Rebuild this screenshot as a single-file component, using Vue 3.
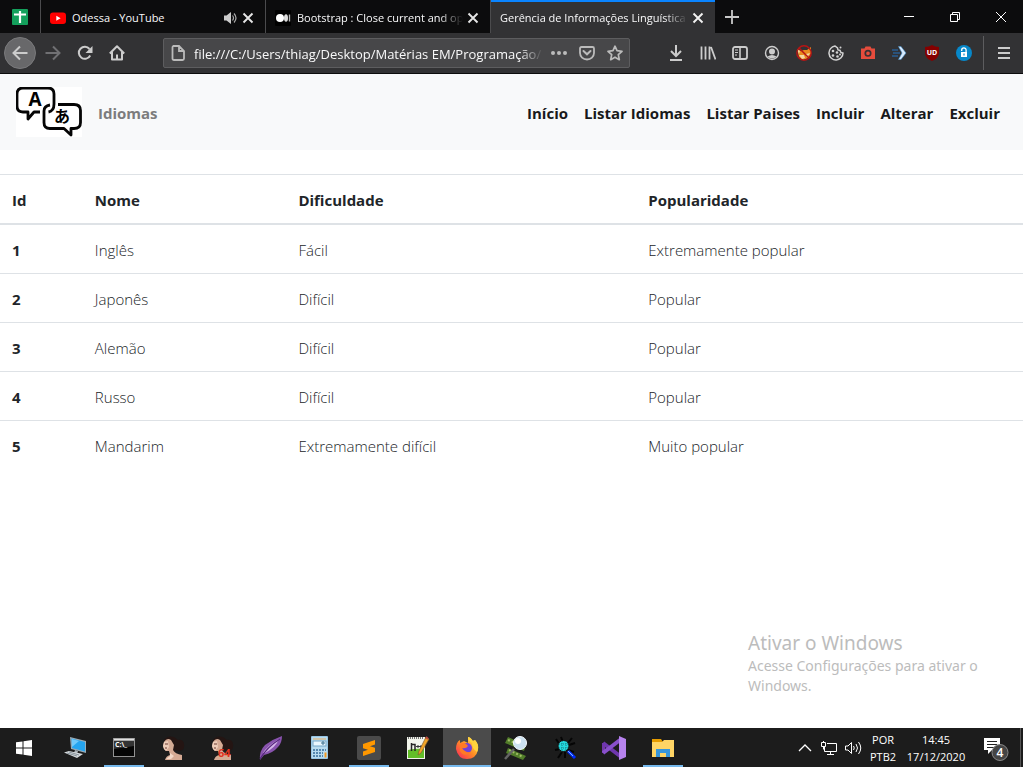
<script setup>
const links = ['Início', 'Listar Idiomas', 'Listar Paises', 'Incluir', 'Alterar', 'Excluir']
const columns = ['Id', 'Nome', 'Dificuldade', 'Popularidade']
const languages = [
  { id: 1, name: 'Inglês', difficulty: 'Fácil', popularity: 'Extremamente popular' },
  { id: 2, name: 'Japonês', difficulty: 'Difícil', popularity: 'Popular' },
  { id: 3, name: 'Alemão', difficulty: 'Difícil', popularity: 'Popular' },
  { id: 4, name: 'Russo', difficulty: 'Difícil', popularity: 'Popular' },
  { id: 5, name: 'Mandarim', difficulty: 'Extremamente difícil', popularity: 'Muito popular' }
]
const address = 'file:///C:/Users/thiag/Desktop/Matérias EM/Programação/'
</script>

<template>
  <div class="desktop">
    <header class="browser">
      <div class="tabs">
        <button class="tab pinned" aria-label="Planilhas">
          <svg width="16" height="16" viewBox="0 0 16 16"><rect width="16" height="16" rx="1" fill="#14a05c" /><path d="M2 5.5h12M8 2v12" stroke="#fff" stroke-width="2.2" /></svg>
        </button>
        <div class="tab">
          <svg width="16" height="16" viewBox="0 0 16 16"><rect y="2.500" width="16" height="11.500" rx="3" fill="#f00" /><path d="M6.300 5.700v5l4.300-2.500z" fill="#fff" /></svg>
          <span class="title">Odessa - YouTube</span>
          <button aria-label="Silenciar aba">
            <svg width="16" height="16" viewBox="0 0 16 16"><path d="M2 5.500h2.500L9 2v12l-4.500-3.500H2z" fill="#ccc" /><path d="M10.500 5.500q2 2.500 0 5M12 3.500q4 4.500 0 9" fill="none" stroke="#aaa" stroke-width="1.200" /></svg>
          </button>
          <button aria-label="Fechar aba"><svg width="16" height="16" viewBox="0 0 16 16"><path d="M3.500 3.500l9 9M12.500 3.500l-9 9" stroke="#e6e6e6" stroke-width="1.900" /></svg></button>
        </div>
        <div class="tab">
          <svg width="16" height="16" viewBox="0 0 16 16"><rect width="16" height="16" rx="1" fill="#000" /><circle cx="5" cy="8" r="4" fill="#fff" /><ellipse cx="11" cy="8" rx="2" ry="3.800" fill="#ddd" /><path d="M14.500 4.500v7" stroke="#bbb" stroke-width="1.400" /></svg>
          <span class="title fade">Bootstrap : Close current and op</span>
          <button aria-label="Fechar aba"><svg width="16" height="16" viewBox="0 0 16 16"><path d="M3.500 3.500l9 9M12.500 3.500l-9 9" stroke="#e6e6e6" stroke-width="1.900" /></svg></button>
        </div>
        <div class="tab active">
          <span class="title fade">Gerência de Informações Linguística</span>
          <button aria-label="Fechar aba"><svg width="16" height="16" viewBox="0 0 16 16"><path d="M3.500 3.500l9 9M12.500 3.500l-9 9" stroke="#f2f2f2" stroke-width="1.900" /></svg></button>
        </div>
        <button class="new-tab" aria-label="Nova aba"><svg width="16" height="16" viewBox="0 0 16 16"><path d="M1 8h14M8 1v14" stroke="#c8c8c8" stroke-width="1.800" /></svg></button>
        <div class="window-controls">
          <button aria-label="Minimizar"><svg width="12" height="12" viewBox="0 0 12 12"><path d="M1 5.500h10" stroke="#fff" /></svg></button>
          <button aria-label="Restaurar"><svg width="12" height="12" viewBox="0 0 12 12"><path d="M1.500 3.500h7v7h-7zM3.500 3V1.500h7v7H9" fill="none" stroke="#fff" /></svg></button>
          <button aria-label="Fechar"><svg width="12" height="12" viewBox="0 0 12 12"><path d="M1 1l10 10M11 1L1 11" stroke="#fff" /></svg></button>
        </div>
      </div>

      <div class="toolbar">
        <div class="tools history">
          <button class="back" aria-label="Voltar"><svg width="16" height="16" viewBox="0 0 16 16"><path d="M15.500 8H1.500M8 1.500L1.500 8 8 14.500" fill="none" stroke="#ccc" stroke-width="2" /></svg></button>
          <button aria-label="Avançar"><svg width="16" height="16" viewBox="0 0 16 16"><path d="M.5 8h14M8 1.500L14.500 8 8 14.500" fill="none" stroke="#707073" stroke-width="2" /></svg></button>
          <button aria-label="Recarregar"><svg width="16" height="16" viewBox="0 0 16 16"><path d="M13.200 10.500A6 6 0 1 1 12.500 4" fill="none" stroke="#ccc" stroke-width="2" /><path d="M15.500 1v7h-7z" fill="#ccc" /></svg></button>
          <button aria-label="Página inicial"><svg width="16" height="16" viewBox="0 0 16 16"><path d="M.8 8.500L8 1.300l7.200 7.200M3 7v7.500h10V7M8 14V9.500" fill="none" stroke="#ccc" stroke-width="2" stroke-linejoin="round" /></svg></button>
        </div>
        <div class="address">
          <svg width="16" height="16" viewBox="0 0 16 16"><path d="M3 1h6l5 5v7.500q0 1.500-1.500 1.500h-8.500q-1.500 0-1.500-1.500V2.500q0-1.500 1.500-1.500zM9 1v5h5" fill="none" stroke="#bbb" stroke-width="1.800" /></svg>
          <input :value="address" type="text" aria-label="Endereço" />
          <button aria-label="Ações da página"><svg width="16" height="16" viewBox="0 0 16 16"><g fill="#bbb"><circle cx="2" cy="8" r="2" /><circle cx="8" cy="8" r="2" /><circle cx="14" cy="8" r="2" /></g></svg></button>
          <button aria-label="Salvar no Pocket"><svg width="16" height="16" viewBox="0 0 16 16"><path d="M2.500 2h11q1.500 0 1.500 1.500V8A7 6.500 0 0 1 1 8V3.500Q1 2 2.500 2z" fill="none" stroke="#bbb" stroke-width="1.800" /><path d="M4.500 6L8 9.300 11.500 6" fill="none" stroke="#bbb" stroke-width="2" stroke-linecap="round" /></svg></button>
          <button aria-label="Adicionar aos favoritos"><svg width="16" height="16" viewBox="0 0 16 16"><path d="M8 1.200l2 4.500 5 .6-3.700 3.400 1 5L8 12.200 3.700 14.700l1-5L1 6.300l5-.6z" fill="none" stroke="#bbb" stroke-width="1.700" stroke-linejoin="round" /></svg></button>
        </div>
        <div class="tools extensions">
          <button aria-label="Downloads"><svg width="16" height="16" viewBox="0 0 16 16"><path d="M8 0v11M3 6l5 5 5-5M2 15h12" fill="none" stroke="#ccc" stroke-width="2" /></svg></button>
          <button aria-label="Biblioteca"><svg width="16" height="16" viewBox="0 0 16 16"><path d="M1.500 1.500v13M5.500 1.500v13M9.500 1.500v13M11 2l4.500 12.500" stroke="#ccc" stroke-width="1.800" /></svg></button>
          <button aria-label="Barra lateral"><svg width="16" height="16" viewBox="0 0 16 16"><rect x="1" y="2" width="14" height="12" rx="2" fill="none" stroke="#ccc" stroke-width="1.800" /><path d="M8 2v12" stroke="#ccc" stroke-width="1.600" /><path d="M3 5h3M3 7.500h3M3 10h2" stroke="#ccc" /></svg></button>
          <button aria-label="Conta"><svg width="16" height="16" viewBox="0 0 16 16"><circle cx="8" cy="8" r="6.500" fill="none" stroke="#ccc" stroke-width="1.400" /><circle cx="8" cy="6.500" r="3" fill="#ccc" /><path d="M3.500 11.500q4.500-3 9 0-4.500 4-9 0z" fill="#ccc" /></svg></button>
          <button aria-label="Bloqueador"><svg width="16" height="16" viewBox="0 0 16 16"><path d="M1 4l4 2 3-1 3 0 4-3v7l-3 4-5 2-4-3z" fill="#e88a20" /><path d="M1 4l3 2-1 3zM3 10l5 0 1 3-3 1zM14 8l-4 1v3l3-2z" fill="#f3d7a2" /><circle cx="8" cy="8" r="7.200" fill="none" stroke="#b81414" stroke-width="1.400" /><path d="M3 3l10 10" stroke="#b81414" stroke-width="1.500" /></svg></button>
          <button aria-label="Cookies"><svg width="16" height="16" viewBox="0 0 16 16"><path d="M7 1A7 7 0 1 0 15 8l-2-.5-1-2-2-.5-.5-2L7 1z" fill="none" stroke="#d2d2d2" stroke-width="1.500" /><g fill="#d2d2d2"><circle cx="5" cy="6" r="1.300" /><circle cx="9" cy="7.500" r="1.300" /><circle cx="5" cy="10.500" r="1.300" /><circle cx="9.500" cy="11.500" r="1.300" /><circle cx="12.500" cy="2.500" r="1" /><circle cx="12" cy="9.500" r="1" /></g></svg></button>
          <button aria-label="Captura de tela"><svg width="16" height="16" viewBox="0 0 16 16"><path d="M1 3.500h3.500L5.500 1.500h5l1 2H15V14H1z" fill="#e64c3c" /><circle cx="8" cy="8.300" r="2.700" fill="none" stroke="#3b3033" stroke-width="1.700" /></svg></button>
          <button aria-label="Encaminhar"><svg width="16" height="16" viewBox="0 0 16 16"><path d="M0 5h6M1 8h7M0 11h6" stroke="#285d91" stroke-width="1.300" /><path d="M6.500 1.500l2.500 0L14 8l-5 6.500H6.500L10 8z" fill="#d9ecff" stroke="#438dca" stroke-width=".6" /></svg></button>
          <button aria-label="uBlock"><svg width="16" height="16" viewBox="0 0 16 16"><path d="M8 0q3 2 7 2v6q0 5-7 8Q1 13 1 8V2q4 0 7-2z" fill="#850000" /><text x="8" y="10" fill="#fff" font-size="7" font-weight="700" text-anchor="middle">UD</text></svg></button>
          <button aria-label="Senhas"><svg width="16" height="16" viewBox="0 0 16 16"><circle cx="8" cy="8" r="8" fill="#0788ca" /><path d="M5.700 6V5a2.200 2.200 0 0 1 4.400 0V7" fill="none" stroke="#fff" stroke-width="1.300" /><rect x="5" y="7" width="6" height="5" fill="#fff" /><path d="M8 8.500v2" stroke="#0788ca" stroke-width="1.200" /></svg></button>
        </div>
        <button class="menu" aria-label="Menu"><svg width="16" height="16" viewBox="0 0 16 16"><path d="M2 3h12M2 8h12M2 13h12" stroke="#ccc" stroke-width="2" /></svg></button>
      </div>
    </header>

    <main class="page">
      <nav class="navbar">
        <a class="brand" href="#" aria-label="Página inicial dos idiomas">
          <svg width="66" height="50" viewBox="0 0 66 50">
            <rect width="66" height="50" fill="#fff" />
            <g fill="none" stroke="#050505" stroke-width="2.800" stroke-linejoin="round">
              <path d="M24 25h-6l-6 7v-7H7q-6 0-6-6V7q0-6 6-6h25q6 0 6 6v10q0 7-5.500 8" />
              <path d="M42 17.500h16q6.500 0 6.500 6v12q0 6-6.500 6h-3V48l-7-6.500H34q-6 0-6-6V24q0-5 6-6" />
            </g>
            <text x="19" y="19" font-size="19" font-weight="700" text-anchor="middle">A</text>
            <text class="kana" x="46" y="35" font-size="16" font-weight="700" text-anchor="middle">あ</text>
          </svg>
        </a>
        <a class="current" href="#">Idiomas</a>
        <div class="links"><a v-for="link in links" :key="link" href="#">{{ link }}</a></div>
      </nav>

      <table>
        <thead><tr><th v-for="column in columns" :key="column" scope="col">{{ column }}</th></tr></thead>
        <tbody>
          <tr v-for="language in languages" :key="language.id">
            <th scope="row">{{ language.id }}</th>
            <td>{{ language.name }}</td>
            <td>{{ language.difficulty }}</td>
            <td>{{ language.popularity }}</td>
          </tr>
        </tbody>
      </table>

      <aside class="activation">
        <p class="activation-title">Ativar o Windows</p>
        <p>Acesse Configurações para ativar o Windows.</p>
      </aside>
    </main>

    <footer class="taskbar">
      <button class="start" aria-label="Iniciar"><svg width="16" height="16" viewBox="0 0 16 16"><path d="M0 2.300L6.500 1.400V7.500H0zM7.500 1.200L16 0v7.500H7.500zM0 8.500h6.500v6.100L0 13.700zM7.500 8.500H16V16l-8.500-1.200z" fill="#fff" /></svg></button>
      <div class="apps">
        <button aria-label="Este computador"><svg width="24" height="24" viewBox="0 0 24 24"><path d="M7 1l16 4v12L8 13z" fill="#9aabb5" /><path d="M8.500 2.500L22 6v9.500L9 12z" fill="#25a5f0" /><path d="M9 3l7 2-7 6z" fill="#70c9fa" /><path d="M12 14l3 1-1 3-3-1z" fill="#aab1b6" /><path d="M1 16.500l5-1.500 14 3-6 4z" fill="#d6dadd" /><path d="M4 17l10 3M6 16l10 3" stroke="#87929a" /></svg></button>
        <button class="running" aria-label="Prompt de comando"><svg width="24" height="24" viewBox="0 0 24 24"><rect x="1" y="2" width="22" height="19" fill="#929292" /><rect x="2" y="5" width="20" height="15" fill="#050505" /><path d="M2 3.500h20" stroke="#e0e0e0" stroke-width="1.500" /><path d="M2 5h20v5L2 13z" fill="#333" /><text x="3" y="11" font-size="7" font-weight="700" fill="#fff">C:\_</text></svg></button>
        <button aria-label="IDA"><svg width="24" height="24" viewBox="0 0 24 24"><path d="M3 4Q6-1 13 1l4 3q5-1 6 4 1 6-4 7l-4-1-5 3-4-8z" fill="#241513" /><path d="M3 6q3-5 7-2l3 5-1 5q2 4 9 5v5H4q1-4 5-5l-1-4H5L3 13l-1-3z" fill="#d5aa94" /><path d="M3 6l4-1 1 6-3 4-2-2-1-3z" fill="#edcdb9" /><path d="M4 8h3M4 12h2" stroke="#6b3a32" /><path d="M9 17l4 3-3 3H5l4-3z" fill="#f2d8c8" /></svg></button>
        <button aria-label="IDA 64"><svg width="24" height="24" viewBox="0 0 24 24"><path d="M3 4Q6-1 13 1l4 3q5-1 6 4 1 6-4 7l-4-1-5 3-4-8z" fill="#241513" /><path d="M3 6q3-5 7-2l3 5-1 5q2 4 9 5v5H4q1-4 5-5l-1-4H5L3 13l-1-3z" fill="#d5aa94" /><path d="M3 6l4-1 1 6-3 4-2-2-1-3z" fill="#edcdb9" /><path d="M4 8h3M4 12h2" stroke="#6b3a32" /><text x="8" y="21" font-size="11" font-weight="700" fill="#df321f">64</text></svg></button>
        <button aria-label="Pena"><svg width="24" height="24" viewBox="0 0 24 24"><path d="M1 24Q0 15 6 9q8-6 17-9 0 7-4 11-5 6-14 8z" fill="#8853ad" /><path d="M4 17Q8 10 20 3q-3 8-14 14z" fill="#d5b6e8" /><path d="M1 23Q8 11 21 3" fill="none" stroke="#57277f" stroke-width="1.300" /></svg></button>
        <button aria-label="Calculadora"><svg width="24" height="24" viewBox="0 0 24 24"><rect x="3" width="17" height="23" rx="1" fill="#98c6e5" /><rect x="4" y="1" width="15" height="21" fill="#b8dcf0" /><path d="M5 3h13" stroke="#e6ad65" /><rect x="5" y="5" width="13" height="5" fill="#e9f7ff" stroke="#75a6c8" /><path d="M14 6h2v2h-2z" fill="none" stroke="#3a718f" /><path d="M5 14h13M5 17h10M5 20h10" stroke="#5688b0" stroke-width="2" stroke-dasharray="2 1" /><path d="M17.500 16.500v5" stroke="#f39b24" stroke-width="2" /></svg></button>
        <button class="running" aria-label="Sublime Text"><svg width="24" height="24" viewBox="0 0 24 24"><rect width="24" height="24" rx="2" fill="#4a4a4a" /><path d="M6 8l12-4v4.500l-5 1.700 5 1.600V16L6 20v-4.500l5-1.700-5-1.600z" fill="#ff9800" /></svg></button>
        <button aria-label="Notepad++"><svg width="24" height="24" viewBox="0 0 24 24"><path d="M1 1h18v22H1z" fill="#f2f4ec" /><path d="M2 14q8-2 16-1v9H2z" fill="#62be28" /><path d="M2 2h16" stroke="#777" stroke-width="2" stroke-dasharray="1 1" /><path d="M5.500 15V7M5.500 8.500H9V15" fill="none" stroke="#252525" stroke-width="1.500" /><path d="M10 10.500h6M12 9v3M15 9v3" stroke="#353535" /><path d="M20 1l3 2-8 14-3 2 1-4z" fill="#f1a529" stroke="#815e31" stroke-width=".7" /><path d="M20 1l2 2" stroke="#bd4941" stroke-width="2" /></svg></button>
        <button class="running selected" aria-label="Firefox"><svg width="24" height="24" viewBox="0 0 24 24"><defs><linearGradient id="flame" x1="1" y1="0" x2="0" y2="1"><stop stop-color="#fff45b" /><stop offset=".5" stop-color="#ff8d23" /><stop offset="1" stop-color="#f91e60" /></linearGradient></defs><path d="M13 1q3 0 4 4l3-1q4 4 3 10-2 9-11 9T1 13Q1 6 5 4v3l4-2 4 2z" fill="url(#flame)" /><circle cx="12" cy="12" r="5" fill="#7142d8" /><path d="M5 8q5-3 8 2-2 3-6 2 3 5 9 4-7 6-11-1z" fill="#ff7a25" /><path d="M13 1q4 1 6 6l1-3q5 6 2 12-5-3-5-9-4-2-4-6z" fill="#ffd33d" /></svg></button>
        <button aria-label="Analisador de memória"><svg width="24" height="24" viewBox="0 0 24 24"><path d="M4 1l18 8-2 6L1 7zM4 12l18 8-3 4-17-7z" fill="#527d2a" /><path d="M4 4l14 6M5 14l14 7" stroke="#a1bd66" stroke-width="2" stroke-dasharray="2 2" /><path d="M10 13L1 23" stroke="#656565" stroke-width="2.500" /><circle cx="16" cy="7" r="6.500" fill="#cce2f1" stroke="#f6faff" /><circle cx="14" cy="5" r="3" fill="#fff" /></svg></button>
        <button aria-label="Depurador"><svg width="24" height="24" viewBox="0 0 24 24"><path d="M7 9L3 3M10 6L8 1M15 7l4-5M7 13l-5 1M9 16l-4 6M16 9l6-2M15 14l6 2M12 16v6" stroke="#050505" stroke-width="2" /><circle cx="10.500" cy="10" r="5.500" fill="#24d9dd" stroke="#111" /><path d="M6 8h9M6 12h9M9 5v9M13 5v9" stroke="#157f87" stroke-dasharray="1 1" /><path d="M15 15l7 7" stroke="#002dff" stroke-width="3" /><path d="M15 15l5 5" stroke="#82b9ff" /></svg></button>
        <button aria-label="Visual Studio"><svg width="24" height="24" viewBox="0 0 24 24"><path d="M1.500 7v10" stroke="#7138a8" stroke-width="3" /><path d="M1 7l17 13" stroke="#6e36ae" stroke-width="4" /><path d="M1 17L18 4" stroke="#8950cc" stroke-width="4" /><path d="M17 0l7 3v18l-7 3z" fill="#b783ee" /></svg></button>
        <button class="running" aria-label="Explorador de Arquivos"><svg width="24" height="24" viewBox="0 0 24 24"><path d="M1 3h9l2 3H1z" fill="#e69c00" /><path d="M1 6h10l2-2h10v17H1z" fill="#ffd565" /><path d="M5 21v-8h14v8h-4v-4H9v4z" fill="#3896da" /></svg></button>
      </div>
      <div class="tray">
        <button aria-label="Ícones ocultos"><svg width="16" height="16" viewBox="0 0 16 16"><path d="M2 11l6-6 6 6" fill="none" stroke="#fff" stroke-width="1.300" /></svg></button>
        <button aria-label="Rede"><svg width="16" height="16" viewBox="0 0 16 16"><path d="M6 3.500h9.500v8H3.500V7M9.500 11.500v3M6 14.500h7M.5 2.500h4v4h-4zM2.500 1v1M2.500 6.500v3" fill="none" stroke="#fff" /></svg></button>
        <button aria-label="Volume"><svg width="18" height="16" viewBox="0 0 18 16"><path d="M1.500 6v4H4l3.500 3.500v-11L4 6zM9.500 6q1.500 2 0 4M12 4q3 4 0 8M14.500 2q4.500 6 0 12" fill="none" stroke="#fff" /></svg></button>
        <button class="language"><span>POR</span><span>PTB2</span></button>
        <button class="clock"><span>14:45</span><span>17/12/2020</span></button>
        <button class="notifications" aria-label="4 notificações"><svg width="26" height="26" viewBox="0 0 26 26"><path d="M1 3h16v12H9l-4 4v-4H1z" fill="#fff" /><path d="M4 6.500h10M4 9.500h10M4 12.500h7" stroke="#222" /><circle cx="17" cy="17.500" r="8" fill="#454545" stroke="#888" /><text x="17" y="22" font-size="12" font-weight="600" text-anchor="middle" fill="#fff">4</text></svg></button>
      </div>
    </footer>
  </div>
</template>

<style>
body { margin: 0; }
</style>

<style scoped>
* { box-sizing: border-box; }
.desktop { min-height: 100vh; display: flex; flex-direction: column; background: #fff; font-family: "Open Sans", "Noto Sans", sans-serif; }
button { border: 0; padding: 0; background: transparent; color: inherit; font: inherit; display: flex; align-items: center; justify-content: center; }
svg { display: block; flex: none; }
a { text-decoration: none; color: inherit; }

.browser { background: #323234; color: #f9f9fa; border-bottom: 1px solid #0c0c0d; }
.tabs { display: flex; height: 33px; background: #0c0c0d; font-size: 11px; }
.tab { flex: 0 1 225px; min-width: 0; display: flex; align-items: center; gap: 2px; padding: 2px 9px 0; border-right: 1px solid #4b4b4d; }
.tab.pinned { flex: 0 0 41px; padding: 0; }
.tab.active { flex-basis: 224px; background: #323234; border-top: 2px solid #0a84ff; border-right: 0; padding-top: 0; }
.title { flex: 1; min-width: 0; overflow: hidden; white-space: nowrap; }
.tab > svg + .title { margin-left: 4px; }
.fade { mask-image: linear-gradient(to left, transparent, #000 24px); }
.new-tab { width: 34px; }
.window-controls { display: flex; margin-left: auto; margin-right: -1px; }
.window-controls button { width: 46px; }

.toolbar { display: flex; align-items: center; height: 40px; }
.tools { display: flex; }
.tools button { width: 32px; height: 32px; }
.history { padding-left: 4px; margin-right: 30px; }
.history .back { border-radius: 50%; background: #68686a; border: 1px solid #7a7a7c; margin-right: 1px; }
.address { flex: 1; min-width: 0; display: flex; align-items: center; height: 30px; padding: 0 6px; background: #474749; border: 1px solid #5d5d5f; border-radius: 2px; }
.address input { flex: 1; min-width: 0; height: 28px; margin: 0 8px 0 8px; padding: 2px 0 0; border: 0; outline: 0; background: transparent; color: #f9f9fa; font: 13px "Open Sans", "Noto Sans", sans-serif; mask-image: linear-gradient(to left, transparent, #000 24px); }
.address button { width: 28px; height: 28px; }
.address button:last-child { width: 16px; margin-left: 6px; }
.address button:nth-of-type(1) { width: 16px; margin-right: 6px; }
.extensions { margin-left: 30px; }
.menu { width: 40px; height: 34px; margin-left: 3px; border-left: 1px solid #5d5d5f; }

.page { flex: 1; position: relative; color: #212529; font-size: 15px; line-height: 24px; }
.navbar { display: flex; align-items: center; padding: 8px 23px 8px 16px; background: #f8f9fa; font-weight: 700; }
.brand { padding: 5px 0; margin-right: 16px; }
.kana { font-family: "Noto Sans CJK JP", sans-serif; }
.current { color: #7c7c7d; padding-top: 2px; }
.links { display: flex; gap: 16px; margin-left: auto; padding-top: 2px; color: #18191a; }
table { width: 100%; margin-top: 24px; border-collapse: separate; border-spacing: 0; table-layout: fixed; }
th, td { padding: 13px 12px 11px; text-align: left; border-top: 1px solid #dee2e6; }
td { font-weight: 300; }
thead th { border-bottom: 2px solid #dee2e6; }
thead th:nth-child(1) { width: 8.1%; }
thead th:nth-child(2) { width: 19.9%; }
thead th:nth-child(3) { width: 34.2%; }
tbody tr:first-child > * { border-top: 0; }
.activation { position: absolute; right: 35px; bottom: 32px; width: 240px; color: #bcbcbc; font-family: "Noto Sans", sans-serif; font-size: 14px; line-height: 20px; }
.activation p { margin: 0; }
.activation .activation-title { font-size: 19px; line-height: 26px; }

.taskbar { display: flex; height: 39px; background: #1c1c1c; color: #fff; font-size: 12px; }
.start { width: 48px; }
.apps { display: flex; gap: 1px; margin-left: 3px; }
.apps button { width: 48px; position: relative; }
.running::after { content: ""; position: absolute; left: 4px; right: 4px; bottom: 0; height: 2px; background: #76b9ed; }
.apps .selected { background: #4b4b4b; }
.selected::after { left: 0; right: 0; }
.tray { display: flex; margin-left: auto; padding-right: 2px; }
.tray > button { width: 24px; }
.tray .language, .tray .clock { flex-direction: column; line-height: 17px; font-size: 11px; }
.tray .language { width: 36px; }
.tray .clock { width: 70px; }
.tray .notifications { width: 50px; border-right: 1px solid #555; }
</style>
